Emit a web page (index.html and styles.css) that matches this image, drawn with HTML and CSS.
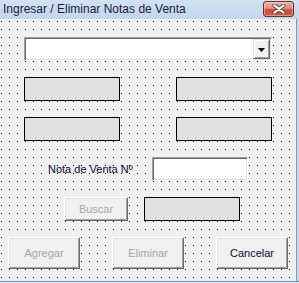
FILE: index.html
```html
<!DOCTYPE html>
<html lang="es">
<head>
<meta charset="utf-8">
<title>Ingresar / Eliminar Notas de Venta</title>
<link rel="stylesheet" href="styles.css">
</head>
<body>
<div class="window">
  <div class="titlebar">
    <span class="title">Ingresar / Eliminar Notas de Venta</span>
    <div class="close">
      <svg width="14" height="10" viewBox="0 0 14 10">
        <path d="M2.5 1.5 L11.5 8.5 M11.5 1.5 L2.5 8.5" stroke="#5a4a4a" stroke-width="4" stroke-linecap="round"/>
        <path d="M2.5 1.5 L11.5 8.5 M11.5 1.5 L2.5 8.5" stroke="#ffffff" stroke-width="2.2" stroke-linecap="round"/>
      </svg>
    </div>
  </div>
  <div class="main">
    <div class="client">
      <div class="combo">
        <div class="combo-field"></div>
        <div class="combo-btn">
          <svg width="7" height="4" viewBox="0 0 7 4"><path d="M0 0 H7 L3.5 4 Z" fill="#000"/></svg>
        </div>
      </div>
      <div class="row row-boxes">
        <div class="box"></div>
        <div class="box"></div>
      </div>
      <div class="row row-boxes">
        <div class="box"></div>
        <div class="box"></div>
      </div>
      <div class="row row-label">
        <span class="label">Nota de Venta Nº</span>
        <div class="textbox"></div>
      </div>
      <div class="row row-search">
        <div class="btn btn-small disabled">Buscar</div>
        <div class="box"></div>
      </div>
      <div class="row row-actions">
        <div class="btn btn-large disabled">Agregar</div>
        <div class="btn btn-large disabled">Eliminar</div>
        <div class="btn btn-large">Cancelar</div>
      </div>
    </div>
    <div class="frame-right"></div>
  </div>
  <div class="frame-bottom"></div>
</div>
</body>
</html>
```

FILE: styles.css
```css
* { box-sizing: border-box; }
html, body { margin: 0; padding: 0; }
body {
  width: 299px;
  height: 283px;
  overflow: hidden;
  font-family: "Liberation Sans", Arial, sans-serif;
  background: #c4d7ed;
}
.window { width: 299px; height: 283px; display: flex; flex-direction: column; }

.titlebar {
  height: 19px;
  display: flex;
  align-items: flex-start;
  justify-content: space-between;
  padding: 0 5px 0 3px;
  background: linear-gradient(#d3e2f3, #c2d5ec);
}
.title {
  font-size: 12px;
  line-height: 19px;
  color: #1c1c40;
  white-space: nowrap;
}
.close {
  margin-top: 1px;
  width: 31px;
  height: 16px;
  border: 1px solid #6a2e28;
  border-radius: 3px;
  background: linear-gradient(#eab1a4 0%, #de8f7f 45%, #c8503b 55%, #cf5d47 100%);
  box-shadow: inset 0 0 0 1px rgba(255,255,255,0.35);
  display: flex;
  align-items: center;
  justify-content: center;
}
.close svg { display: block; }

.main { display: flex; height: 262px; }
.client {
  width: 296px;
  height: 262px;
  display: flex;
  flex-direction: column;
  padding-top: 18px;
  background: conic-gradient(at 1px 1px, #f0f0f0 75%, #000 0) 1px 2px / 8px 8px, #f0f0f0;
}
.frame-right {
  width: 3px;
  border-left: 1px solid #8896a8;
  background: #c4d7ed;
}
.frame-bottom {
  height: 2px;
  border-top: 1px solid #5b9bd5;
  background: #dce8f5;
}

.combo {
  margin-left: 24px;
  width: 248px;
  height: 24px;
  display: flex;
  padding: 1px;
  border: 1px solid;
  border-color: #a0a0a0 #ffffff #ffffff #a0a0a0;
  box-shadow: inset 1px 1px 0 #696969, inset -1px -1px 0 #e3e3e3;
  background: #fff;
}
.combo-field { flex: 1; }
.combo-btn {
  width: 17px;
  height: 20px;
  background: #f0f0f0;
  border: 1px solid;
  border-color: #e3e3e3 #696969 #696969 #e3e3e3;
  box-shadow: inset 1px 1px 0 #ffffff, inset -1px -1px 0 #a0a0a0;
  display: flex;
  align-items: center;
  justify-content: center;
}
.combo-btn svg { display: block; margin-top: 1px; }

.row { display: flex; margin-top: 16px; }
.row-boxes { margin-left: 24px; gap: 56px; }
.box {
  width: 96px;
  height: 24px;
  border: 1px solid #000;
  background: #e0e0e0;
}
.row-label { align-items: center; margin-left: 48px; }
.label {
  width: 104px;
  font-size: 11px;
  color: #0c0c3c;
  white-space: nowrap;
}
.textbox {
  width: 96px;
  height: 24px;
  border: 1px solid;
  border-color: #a0a0a0 #ffffff #ffffff #a0a0a0;
  box-shadow: inset 1px 1px 0 #696969, inset -1px -1px 0 #e3e3e3;
  background: #fff;
}
.row-search { margin-left: 64px; gap: 16px; }
.row-actions { margin-left: 8px; gap: 32px; }

.btn {
  display: flex;
  align-items: center;
  justify-content: center;
  font-size: 11px;
  color: #0c0c3c;
  background: #f0f0f0;
  border: 1px solid;
  border-color: #ffffff #696969 #696969 #ffffff;
  box-shadow: inset 1px 1px 0 #e3e3e3, inset -1px -1px 0 #a0a0a0;
}
.btn.disabled { color: #a8a8a8; }
.btn-small { width: 64px; height: 24px; }
.btn-large { width: 72px; height: 32px; }
```
